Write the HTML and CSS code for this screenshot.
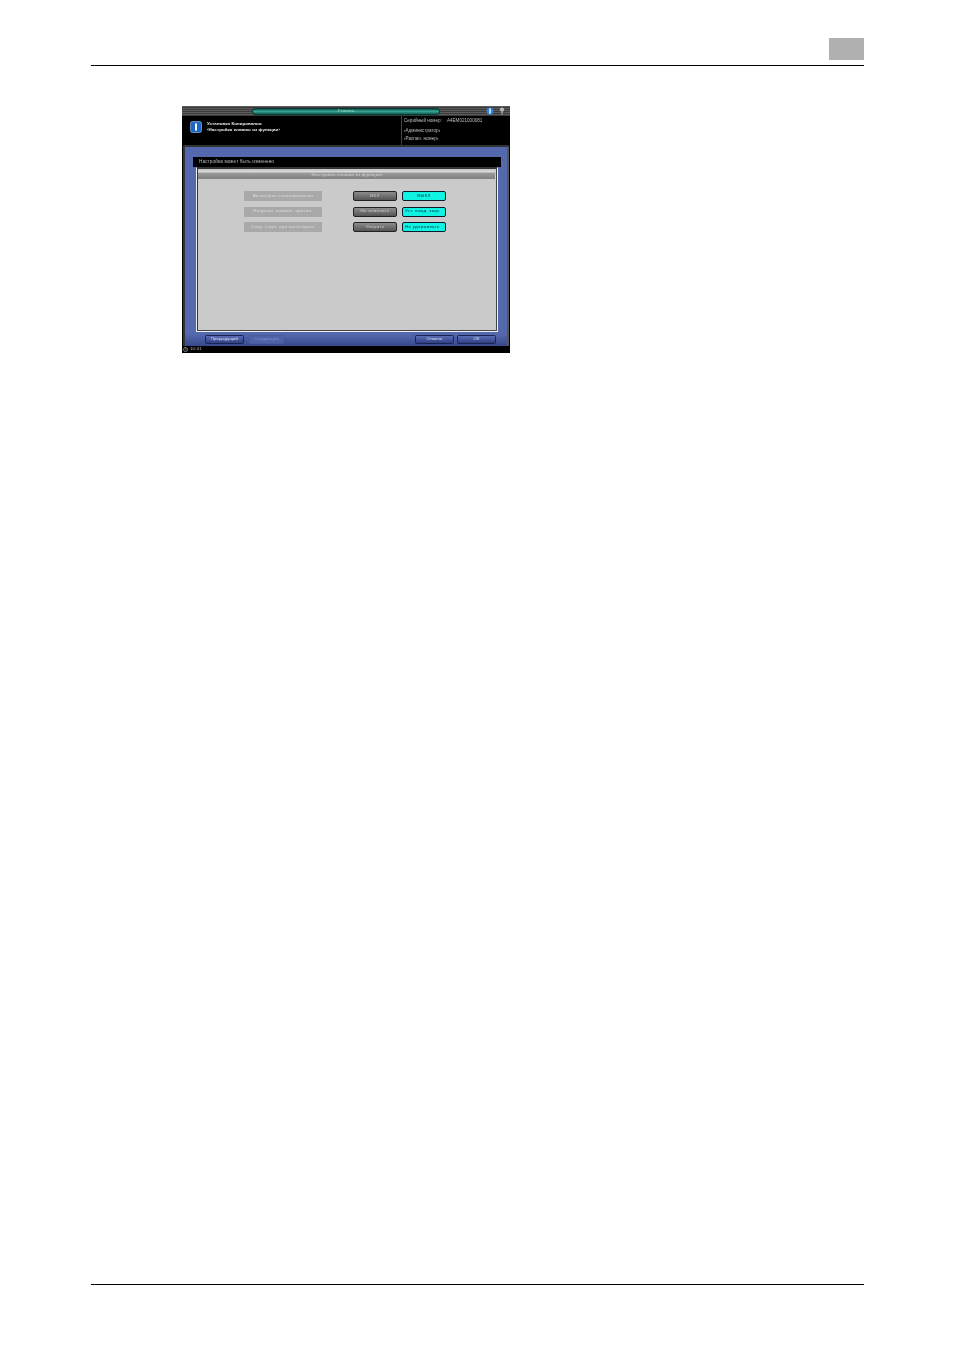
FILE: index.html
```html
<!DOCTYPE html>
<html lang="ru">
<head>
<meta charset="utf-8">
<title>Настройка клавиш из функции</title>
<link rel="stylesheet" href="styles.css">
</head>
<body>
<header class="page-head">
  <div class="tab"></div>
</header>
<main class="content">
  <div class="screen">
    <div class="topbar">
      <div class="pill"><span>Утилита</span></div>
      <div class="top-icons">
        <svg class="ti" viewBox="0 0 8 8"><circle cx="4" cy="4" r="3.6" fill="#2f7fd0"/><rect x="3.2" y="1.4" width="1.6" height="5.2" fill="#e8f2ff"/></svg>
        <svg class="ti" viewBox="0 0 8 8"><circle cx="4" cy="2.6" r="2.2" fill="#b8b8b8"/><rect x="3.3" y="3.6" width="1.4" height="4" fill="#9a9a9a"/></svg>
      </div>
    </div>
    <div class="info">
      <div class="info-left">
        <svg class="info-icon" viewBox="0 0 12 12"><rect x="0.5" y="0.5" width="11" height="11" rx="2" fill="#1f66c4" stroke="#8db8ea" stroke-width="0.7"/><rect x="5" y="2.4" width="2" height="7.2" fill="#f0f6ff"/></svg>
        <div class="info-title">
          <div>Установка Копирования</div>
          <div>‹Настройка клавиш из функции›</div>
        </div>
      </div>
      <div class="info-right">
        <div class="serial"><span>Серийный номер:</span><span>A4EM021000081</span></div>
        <div>‹Администратор›</div>
        <div>‹Распио. номер›</div>
      </div>
    </div>
    <div class="blue">
      <div class="notice">Настройка может быть изменено</div>
      <div class="panel">
        <div class="panel-title">‹Настройка клавиш из функции›</div>
        <div class="rows">
          <div class="row">
            <div class="label">Автосброс степлирования</div>
            <div class="btn">ВКЛ</div>
            <div class="btn on">ВЫКЛ</div>
          </div>
          <div class="row">
            <div class="label">Направл. камван. оригин.</div>
            <div class="btn">Не отменять</div>
            <div class="btn on left">Уст. кажд. загр.</div>
          </div>
          <div class="row">
            <div class="label">Сохр. Сорт. при автосбросе</div>
            <div class="btn">Уверить</div>
            <div class="btn on left">Не удерживать</div>
          </div>
        </div>
      </div>
      <div class="actions">
        <div class="nav">
          <div class="act">Предыдущий</div>
          <div class="act dim">Следующий</div>
        </div>
        <div class="nav tight">
          <div class="act">Отмена</div>
          <div class="act">ОК</div>
        </div>
      </div>
    </div>
    <div class="status">
      <svg class="clock" viewBox="0 0 6 6"><circle cx="3" cy="3" r="2.4" fill="none" stroke="#bbb" stroke-width="0.8"/><path d="M3 1.6V3H4.2" fill="none" stroke="#bbb" stroke-width="0.6"/></svg>
      <span>10:41</span>
    </div>
  </div>
</main>
<footer class="page-foot"></footer>
</body>
</html>
```
FILE: styles.css
```css
* { box-sizing: border-box; }
html, body { margin: 0; padding: 0; background: #fff; }
body {
  width: 954px;
  height: 1350px;
  font-family: "Liberation Sans", Arial, sans-serif;
  display: flex;
  flex-direction: column;
  overflow: hidden;
}
.page-head {
  margin: 38px 90px 0 91px;
  height: 28px;
  border-bottom: 1px solid #000;
  display: flex;
  justify-content: flex-end;
  align-items: flex-start;
}
.tab { width: 35px; height: 22px; background: #b0b0b0; }
.content { flex: 1; padding: 40px 0 0 182px; }
.screen {
  width: 328px;
  height: 247px;
  background: #000;
  display: flex;
  flex-direction: column;
  font-size: 4.6px;
  line-height: 1;
  letter-spacing: .15px;
  filter: blur(.25px);
}
.topbar {
  height: 10px;
  background: repeating-linear-gradient(#5c5c5c 0 1px, #3a3a3a 1px 2px);
  position: relative;
  display: flex;
  justify-content: flex-end;
  align-items: center;
  padding-right: 4px;
}
.pill {
  position: absolute;
  left: 70px;
  top: 1.5px;
  width: 188px;
  height: 7px;
  border-radius: 4px / 3.5px;
  background: linear-gradient(#0c4f49, #3aa894 45%, #0e5f57);
  border: 1px solid #083a36;
  color: #a8dccf;
  display: flex;
  justify-content: center;
  align-items: center;
  font-size: 4.2px;
}
.top-icons { display: flex; gap: 4px; }
.ti { width: 8px; height: 8px; display: block; }
.info { height: 29px; display: flex; background: #000; }
.info-left { width: 219px; display: flex; align-items: flex-start; padding: 5px 0 0 8px; gap: 5px; }
.info-icon { width: 12px; height: 12px; display: block; }
.info-title { color: #eee; font-weight: bold; font-size: 4.4px; letter-spacing: .1px; display: flex; flex-direction: column; gap: 2px; padding-top: 1px; }
.info-right { flex: 1; border-left: 1px solid #444; padding: 3px 0 0 2px; color: #bbb; display: flex; flex-direction: column; gap: 3px; letter-spacing: 0; }
.serial { display: flex; gap: 5px; margin-bottom: 2.4px; }
.blue {
  height: 201px;
  margin: 0 1px;
  background: linear-gradient(#5468ae, #5468ae 94%, #38488a);
  border: 2px solid #333;
  border-bottom: 0;
  border-right-color: #555;
  border-radius: 2px 2px 0 0;
  padding: 10px 6px 0 8px;
  display: flex;
  flex-direction: column;
}
.notice { height: 10px; background: #000; color: #bbb; display: flex; align-items: center; padding-left: 6px; flex: none; }
.panel {
  margin: 0 3px;
  height: 165px;
  background: #cacaca;
  border: 1px solid #f0f0f0;
  border-top: 1px solid #333;
  box-shadow: inset 1px 1px 0 #333, inset -1px -1px 0 #444;
  padding: 3px 2px 0 1px;
  flex: none;
}
.panel-title {
  height: 8px;
  background: linear-gradient(#eee, #999 30%, #808080);
  color: #d4d4d4;
  display: flex;
  align-items: center;
  justify-content: center;
  font-size: 4.4px;
  letter-spacing: .25px;
}
.rows { padding: 12px 0 0 46px; display: flex; flex-direction: column; gap: 5.5px; }
.row { display: flex; align-items: center; height: 10px; }
.label { width: 78px; height: 10px; background: #a9a9a9; color: #dedede; display: flex; align-items: center; justify-content: center; font-size: 4.4px; letter-spacing: .3px; margin-right: 31px; }
.btn { width: 44px; height: 10px; margin-right: 5px; border-radius: 2px; background: linear-gradient(#8c8c8c, #555); border: 1px solid #222; color: #ccc; display: flex; align-items: center; justify-content: center; font-size: 4.4px; letter-spacing: .3px; }
.btn.on { background: #10f2e2; color: #034; border: 1.5px solid #0a1a2a; white-space: nowrap; overflow: hidden; }
.btn.left { justify-content: flex-start; padding-left: 2px; }
.actions { display: flex; justify-content: space-between; padding: 3px 5px 0 12px; flex: none; }
.nav { display: flex; gap: 5px; }
.nav.tight { gap: 3px; }
.act { width: 39px; height: 9px; border-radius: 1.5px; background: linear-gradient(#5a6cb4, #2f3f86); border: 1px solid #1a2450; color: #dfe3f4; display: flex; align-items: center; justify-content: center; font-size: 4.2px; white-space: nowrap; }
.act.dim { width: 35px; background: #4f62a8; border-color: #4a5c9e; color: #7f8fc4; }
.status { flex: 1; display: flex; align-items: center; gap: 2px; padding-left: 1px; color: #bbb; font-size: 4.4px; }
.clock { width: 5px; height: 5px; display: block; }
.page-foot { margin: 0 90px 65px 91px; border-top: 1px solid #000; height: 1px; }
```
